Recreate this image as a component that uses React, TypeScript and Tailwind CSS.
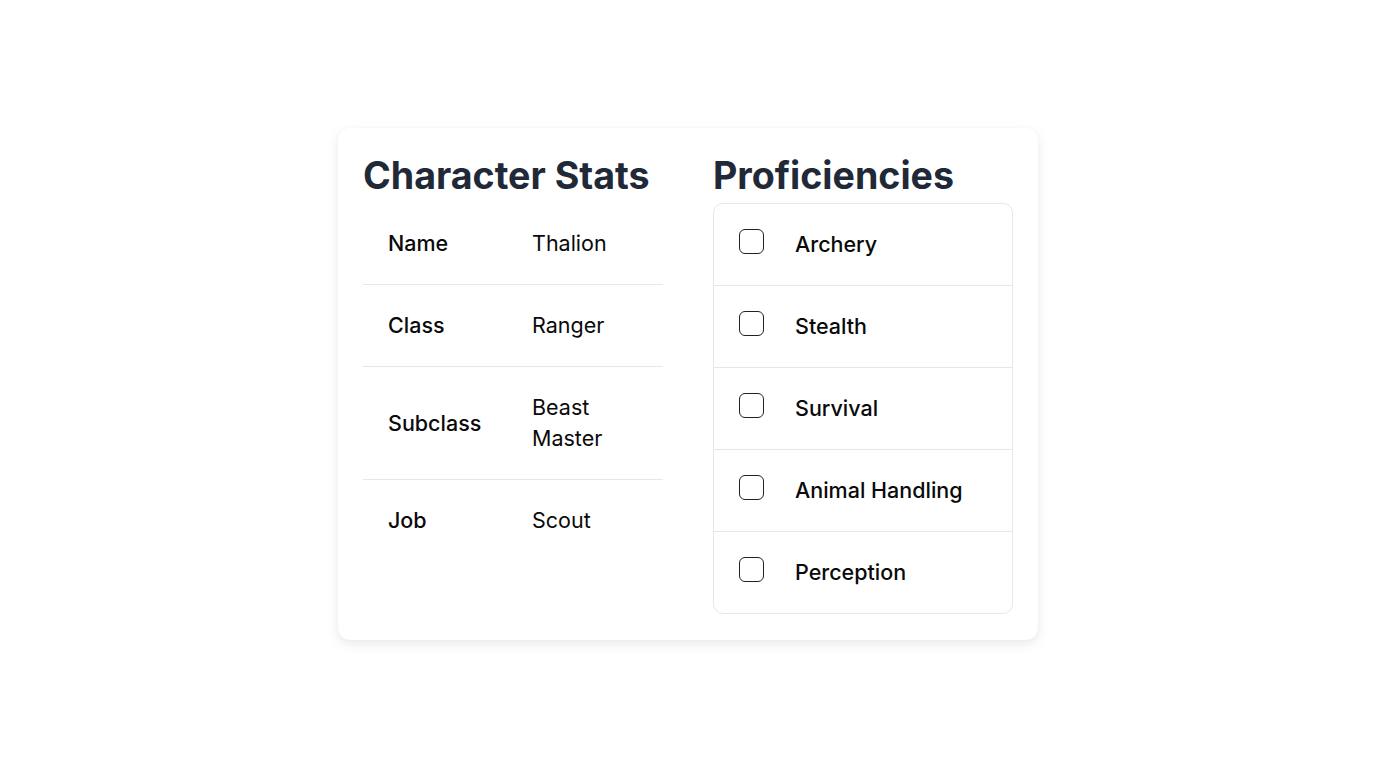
import React from "react";

const stats: { label: string; value: string }[] = [
  { label: "Name", value: "Thalion" },
  { label: "Class", value: "Ranger" },
  { label: "Subclass", value: "Beast Master" },
  { label: "Job", value: "Scout" },
];

const profs = ["Archery", "Stealth", "Survival", "Animal Handling", "Perception"];

export default function App() {
  return (
    <div
      className="min-h-screen w-full bg-white flex items-center justify-center"
      style={{ fontFamily: "Inter, 'Noto Sans', sans-serif" }}
    >
      <div className="w-[700px] bg-white rounded-xl shadow-[0_4px_12px_rgba(0,0,0,0.09),0_0_2px_rgba(0,0,0,0.04)] pt-[27px] pb-[26px] px-[25px] grid grid-cols-2 gap-x-[50px]">
        <div>
          <h2 className="text-[37.6px] leading-[42px] font-bold text-[#1f2937] mb-[6px]">
            Character Stats
          </h2>
          <table className="w-full border-collapse">
            <tbody>
              {stats.map((s, i) => (
                <tr
                  key={s.label}
                  className={i < stats.length - 1 ? "border-b border-[#e5e7eb]" : ""}
                >
                  <td className="w-[144px] px-[25px] py-[25px] align-middle text-[21.5px] leading-[31px] font-medium text-[#0a0a0a]">
                    {s.label}
                  </td>
                  <td className="px-[25px] py-[25px] align-middle text-[21.5px] leading-[31px] text-[#0a0a0a]">
                    {s.value}
                  </td>
                </tr>
              ))}
            </tbody>
          </table>
        </div>
        <div>
          <h2 className="text-[37.6px] leading-[42px] font-bold text-[#1f2937] mb-[6px]">
            Proficiencies
          </h2>
          <div className="border border-[#e5e7eb] rounded-[10px]">
            {profs.map((p, i) => (
              <div
                key={p}
                className={
                  "flex items-start px-[25px] py-[25px] " +
                  (i < profs.length - 1 ? "border-b border-[#e5e7eb]" : "")
                }
              >
                <div className="w-[25px] h-[25px] rounded-[6px] border-[1.75px] border-[#222] bg-white shrink-0" />
                <span className="ml-[31px] text-[21.5px] leading-[31px] font-medium text-[#0a0a0a]">
                  {p}
                </span>
              </div>
            ))}
          </div>
        </div>
      </div>
    </div>
  );
}
